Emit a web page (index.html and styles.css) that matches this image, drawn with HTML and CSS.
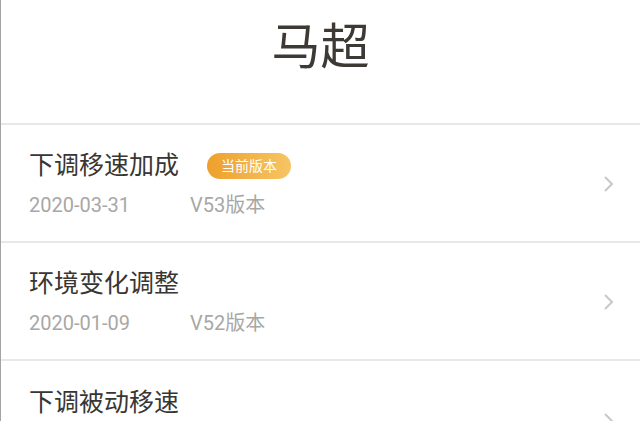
FILE: index.html
```html
<!DOCTYPE html>
<html lang="zh-CN">
<head>
    <meta charset="UTF-8">
    <meta name="viewport" content="width=device-width, initial-scale=1.0">
    <title>马超</title>
    <link rel="stylesheet" href="styles.css">
</head>
<body>
    <div class="page">
        <header class="hero-header">
            <h1>马超</h1>
        </header>

        <ul class="change-list">
            <li class="change-item">
                <div class="change-info">
                    <div class="change-title">
                        <span>下调移速加成</span>
                        <span class="badge">当前版本</span>
                    </div>
                    <div class="change-meta">
                        <span class="date">2020-03-31</span>
                        <span class="version">V53版本</span>
                    </div>
                </div>
                <svg class="chevron" width="11" height="18" viewBox="0 0 11 18">
                    <polyline points="2,2 9,9 2,16" />
                </svg>
            </li>
            <li class="change-item">
                <div class="change-info">
                    <div class="change-title">
                        <span>环境变化调整</span>
                    </div>
                    <div class="change-meta">
                        <span class="date">2020-01-09</span>
                        <span class="version">V52版本</span>
                    </div>
                </div>
                <svg class="chevron" width="11" height="18" viewBox="0 0 11 18">
                    <polyline points="2,2 9,9 2,16" />
                </svg>
            </li>
            <li class="change-item">
                <div class="change-info">
                    <div class="change-title">
                        <span>下调被动移速</span>
                    </div>
                </div>
                <svg class="chevron" width="11" height="18" viewBox="0 0 11 18">
                    <polyline points="2,2 9,9 2,16" />
                </svg>
            </li>
        </ul>
    </div>
</body>
</html>
```

FILE: styles.css
```css
* {
    box-sizing: border-box;
}

body {
    margin: 0;
    background-color: #fff;
    font-family: Roboto, "Noto Sans CJK SC", sans-serif;
    color: #383633;
    overflow: hidden;
}

.page {
    border-left: 1px solid #a3a3a3;
    height: 421px;
}

.hero-header {
    height: 123px;
    display: flex;
    justify-content: center;
    align-items: flex-start;
}

.hero-header h1 {
    margin: 0;
    padding-top: 13px;
    font-size: 49px;
    font-weight: 400;
    line-height: 70px;
    color: #3d3a36;
}

.change-list {
    list-style: none;
    margin: 0;
    padding: 0;
}

.change-item {
    height: 118px;
    border-top: 2px solid #e8e8e8;
    padding: 0 26px 0 28px;
    display: flex;
    align-items: center;
    justify-content: space-between;
}

/* last row is cut by the viewport, so pin its parts from the top */
.change-item:last-child {
    align-items: flex-start;
    padding-top: 25px;
}

.change-item:last-child .chevron {
    margin-top: 26px;
}

.change-info {
    display: flex;
    flex-direction: column;
    gap: 11px;
    margin-top: 1px;
}

.change-title {
    display: flex;
    align-items: center;
    gap: 28px;
    font-size: 25px;
    line-height: 32px;
    color: #383633;
}

.badge {
    display: inline-block;
    height: 26px;
    line-height: 26px;
    padding: 0 14px;
    border-radius: 13px;
    font-size: 14px;
    color: #fff;
    background: linear-gradient(90deg, #eea02c, #f6c564);
}

.change-meta {
    display: flex;
    font-size: 20px;
    line-height: 24px;
    color: #a9a7a5;
}

.date {
    width: 161px;
}

.chevron {
    fill: none;
    stroke: #c8c8c8;
    stroke-width: 2;
    margin-top: 2px;
}
```
